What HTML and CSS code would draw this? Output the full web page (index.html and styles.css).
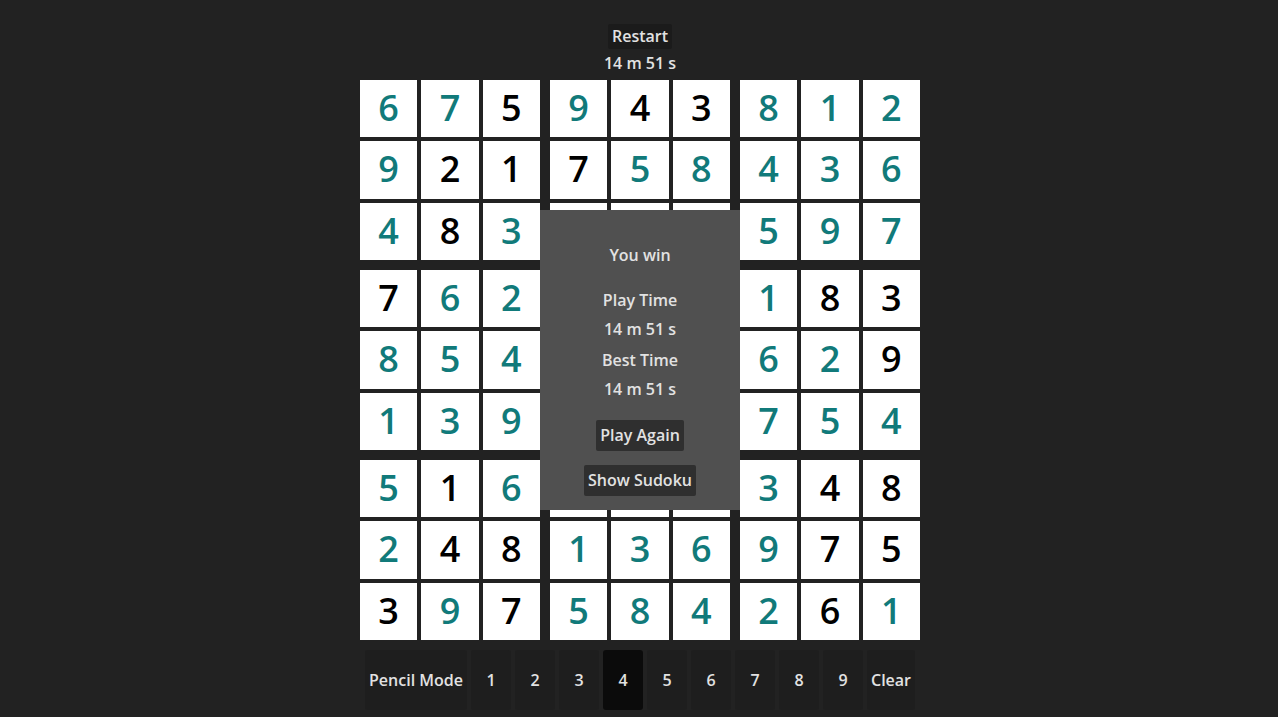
FILE: index.html
```html
<!DOCTYPE html>
<html>
<head>
<meta charset="utf-8">
<link rel="stylesheet" href="styles.css">
</head>
<body>
<div class="app">
  <button class="restart">Restart</button>
  <div class="timer">14 m 51 s</div>
  <div class="board-wrap">
    <div class="board">
      <div class="box">
        <div class="cell user">6</div><div class="cell user">7</div><div class="cell">5</div>
        <div class="cell user">9</div><div class="cell">2</div><div class="cell">1</div>
        <div class="cell user">4</div><div class="cell">8</div><div class="cell user">3</div>
      </div>
      <div class="box">
        <div class="cell user">9</div><div class="cell">4</div><div class="cell">3</div>
        <div class="cell">7</div><div class="cell user">5</div><div class="cell user">8</div>
        <div class="cell"></div><div class="cell"></div><div class="cell"></div>
      </div>
      <div class="box">
        <div class="cell user">8</div><div class="cell user">1</div><div class="cell user">2</div>
        <div class="cell user">4</div><div class="cell user">3</div><div class="cell user">6</div>
        <div class="cell user">5</div><div class="cell user">9</div><div class="cell user">7</div>
      </div>
      <div class="box">
        <div class="cell">7</div><div class="cell user">6</div><div class="cell user">2</div>
        <div class="cell user">8</div><div class="cell user">5</div><div class="cell user">4</div>
        <div class="cell user">1</div><div class="cell user">3</div><div class="cell user">9</div>
      </div>
      <div class="box">
        <div class="cell"></div><div class="cell"></div><div class="cell"></div>
        <div class="cell"></div><div class="cell"></div><div class="cell"></div>
        <div class="cell"></div><div class="cell"></div><div class="cell"></div>
      </div>
      <div class="box">
        <div class="cell user">1</div><div class="cell">8</div><div class="cell">3</div>
        <div class="cell user">6</div><div class="cell user">2</div><div class="cell">9</div>
        <div class="cell user">7</div><div class="cell user">5</div><div class="cell user">4</div>
      </div>
      <div class="box">
        <div class="cell user">5</div><div class="cell">1</div><div class="cell user">6</div>
        <div class="cell user">2</div><div class="cell">4</div><div class="cell">8</div>
        <div class="cell">3</div><div class="cell user">9</div><div class="cell">7</div>
      </div>
      <div class="box">
        <div class="cell"></div><div class="cell"></div><div class="cell"></div>
        <div class="cell user">1</div><div class="cell user">3</div><div class="cell user">6</div>
        <div class="cell user">5</div><div class="cell user">8</div><div class="cell user">4</div>
      </div>
      <div class="box">
        <div class="cell user">3</div><div class="cell">4</div><div class="cell">8</div>
        <div class="cell user">9</div><div class="cell">7</div><div class="cell">5</div>
        <div class="cell user">2</div><div class="cell">6</div><div class="cell user">1</div>
      </div>
    </div>
    <div class="modal">
      <div class="m-title">You win</div>
      <div class="m-label">Play Time</div>
      <div class="m-value">14 m 51 s</div>
      <div class="m-label m-best">Best Time</div>
      <div class="m-value">14 m 51 s</div>
      <button class="m-btn m-again">Play Again</button>
      <button class="m-btn m-show">Show Sudoku</button>
    </div>
  </div>
  <div class="toolbar">
    <button class="tool pencil">Pencil Mode</button>
    <button class="tool num">1</button>
    <button class="tool num">2</button>
    <button class="tool num">3</button>
    <button class="tool num active">4</button>
    <button class="tool num">5</button>
    <button class="tool num">6</button>
    <button class="tool num">7</button>
    <button class="tool num">8</button>
    <button class="tool num">9</button>
    <button class="tool clear">Clear</button>
  </div>
</div>
</body>
</html>
```
FILE: styles.css
```css
html, body {
  margin: 0;
  padding: 0;
  background: #222222;
  height: 100%;
}
body {
  font-family: "Open Sans", "Noto Sans", sans-serif;
  color: #e2e2e2;
  font-size: 16px;
  font-weight: 600;
}
button {
  font-family: inherit;
  font-size: 16px;
  font-weight: 600;
  color: #e2e2e2;
  border: none;
  cursor: pointer;
}
.app {
  display: flex;
  flex-direction: column;
  align-items: center;
  padding-top: 24px;
  padding-left: 2px;
}
.restart {
  height: 25px;
  line-height: 25px;
  padding: 0 4px;
  background: #1b1b1b;
  border-radius: 2px;
}
.timer {
  margin-top: 3px;
  line-height: 22px;
  height: 22px;
}
.board-wrap {
  position: relative;
  margin-top: 6px;
}
.board {
  display: grid;
  grid-template-columns: repeat(3, 180px);
  grid-template-rows: repeat(3, 180px);
  gap: 10px;
}
.box {
  display: grid;
  grid-template-columns: repeat(3, 1fr);
  grid-template-rows: repeat(3, 1fr);
  gap: 4px;
}
.cell {
  background: #ffffff;
  color: #000000;
  font-size: 36px;
  font-weight: 600;
  display: flex;
  align-items: center;
  justify-content: center;
  padding-bottom: 2px;
  box-sizing: border-box;
}
.cell.user {
  color: #117a7a;
}
.modal {
  position: absolute;
  left: 180px;
  top: 130px;
  width: 200px;
  height: 300px;
  background: #505050;
  display: flex;
  flex-direction: column;
  align-items: center;
  padding-top: 34px;
  box-sizing: border-box;
  line-height: 22px;
}
.m-label {
  margin-top: 23px;
}
.m-best {
  margin-top: 9px;
}
.m-value {
  margin-top: 7px;
}
.m-btn {
  background: #2f2f2f;
  height: 31px;
  line-height: 31px;
  padding: 0 4px;
  border-radius: 2px;
}
.m-again {
  margin-top: 20px;
}
.m-show {
  margin-top: 14px;
}
.toolbar {
  display: flex;
  gap: 4px;
  margin-top: 10px;
}
.tool {
  height: 60px;
  background: #1e1e1e;
  border-radius: 3px;
  padding: 0;
}
.tool.pencil {
  width: 102px;
}
.tool.clear {
  width: 48px;
}
.tool.num {
  width: 40px;
}
.tool.active {
  background: #0b0b0b;
}
```
